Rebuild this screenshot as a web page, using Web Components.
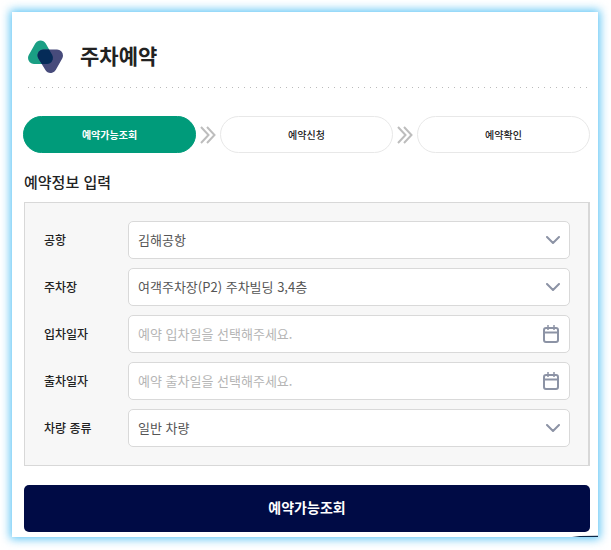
<!DOCTYPE html>
<html lang="ko">
<head>
<meta charset="utf-8">
<meta name="viewport" content="width=device-width, initial-scale=1">
<title>주차예약</title>
<style>
  body {
    margin: 0;
    padding: 12px 13px 13px 12px;
    background: #fff;
    color: #222;
    font-family: "Noto Sans CJK KR", "Noto Sans", sans-serif;
  }
</style>
</head>
<body>
<parking-card>
  <page-header>주차예약</page-header>
  <step-list>
    <step-item current>예약가능조회</step-item>
    <step-item>예약신청</step-item>
    <step-item>예약확인</step-item>
  </step-list>
  <reserve-form heading="예약정보 입력" action="예약가능조회">
    <select-field label="공항" value="김해공항"></select-field>
    <select-field label="주차장" value="여객주차장(P2) 주차빌딩 3,4층"></select-field>
    <date-field label="입차일자" placeholder="예약 입차일을 선택해주세요."></date-field>
    <date-field label="출차일자" placeholder="예약 출차일을 선택해주세요."></date-field>
    <select-field label="차량 종류" value="일반 차량"></select-field>
  </reserve-form>
</parking-card>

<script>
class ParkingCard extends HTMLElement {
  constructor() {
    super();
    this.attachShadow({ mode: "open" });
    this.shadowRoot.innerHTML = `
      <style>
        :host {
          display: block;
          position: relative;
        }
        .glow {
          position: absolute;
          inset: -2px;
          background: #5cc4f5;
          filter: blur(5px);
        }
        .card {
          position: relative;
          padding: 26px 8px 5px 12px;
          background: #fff;
        }
        /* top edge of the floating button below the card */
        .edge {
          position: absolute;
          right: 0;
          bottom: 0;
          width: 26px;
          height: 2px;
          background: #0a2748;
          clip-path: polygon(0 100%, 30% 50%, 100% 40%, 100% 100%);
        }
      </style>
      <div class="glow"></div>
      <div class="card">
        <slot></slot>
        <div class="edge"></div>
      </div>
    `;
  }
}

class PageHeader extends HTMLElement {
  constructor() {
    super();
    this.attachShadow({ mode: "open" });
    this.shadowRoot.innerHTML = `
      <style>
        :host { display: block; margin-left: 4px; }
        header {
          display: flex;
          align-items: center;
          gap: 16px;
          height: 36px;
        }
        h1 { margin: 0; padding-bottom: 2px; font-size: 21px; line-height: 32px; font-weight: 700; }
        .dots {
          height: 1px;
          margin-top: 13px;
          background: repeating-linear-gradient(90deg, #bbb 0 1px, transparent 1px 6px);
        }
      </style>
      <header>
        <svg width="36" height="36" viewBox="0 0 36 36" stroke-width="12" stroke-linejoin="round" aria-hidden="true">
          <defs>
            <mask id="front" maskUnits="userSpaceOnUse" x="0" y="0" width="36" height="36">
              <path d="M15.500 17.500H29L22.500 29Z" fill="#fff" stroke="#fff"/>
            </mask>
          </defs>
          <path d="M12.500 8.500L19 20H6Z" fill="#1a9f84" stroke="#1a9f84"/>
          <path d="M15.500 17.500H29L22.500 29Z" fill="#474b7b" stroke="#474b7b"/>
          <g mask="url(#front)">
            <path d="M12.500 8.500L19 20H6Z" fill="#052b58" stroke="#052b58"/>
          </g>
        </svg>
        <h1><slot></slot></h1>
      </header>
      <div class="dots"></div>
    `;
  }
}

class StepList extends HTMLElement {
  constructor() {
    super();
    this.attachShadow({ mode: "open" });
    this.shadowRoot.innerHTML = `
      <style>
        :host {
          display: flex;
          margin: 28px 0 0 -1px;
        }
      </style>
      <slot></slot>
    `;
  }
}

class StepItem extends HTMLElement {
  constructor() {
    super();
    this.attachShadow({ mode: "open" });
    this.shadowRoot.innerHTML = `
      <style>
        :host { display: flex; flex: 1 1 0; align-items: center; }
        :host(:not(:first-child)) { flex-basis: 24px; }
        svg { flex: none; width: 16px; height: 18px; margin: 0 4px; }
        :host(:first-child) svg { display: none; }
        .pill {
          flex: 1;
          box-sizing: border-box;
          border: 1px solid #e8e8e8;
          border-radius: 19px;
          text-align: center;
          font-size: 10px;
          line-height: 35px;
          font-weight: 500;
        }
        :host([current]) .pill {
          border-color: #009b7a;
          background: #009b7a;
          color: #fff;
          font-weight: 700;
        }
      </style>
      <svg viewBox="0 0 16 18" fill="none" stroke="#bdbdbd" stroke-width="2" aria-hidden="true">
        <path d="M1 1L8.500 9L1 17M7 1L14.500 9L7 17"/>
      </svg>
      <div class="pill"><slot></slot></div>
    `;
  }
}

class ReserveForm extends HTMLElement {
  constructor() {
    super();
    this.attachShadow({ mode: "open" });
    this.shadowRoot.innerHTML = `
      <style>
        :host { display: block; }
        h2 {
          margin: 0;
          padding: 17px 0 8px;
          font-size: 15px;
          line-height: 24px;
          font-weight: 500;
        }
        .panel {
          display: grid;
          gap: 9px;
          padding: 18px 18px 18px 19px;
          border: 1px solid #d8d8d8;
          border-right-width: 2px;
          background: #f7f7f7;
        }
        button {
          display: block;
          width: 100%;
          margin: 19px 0 0;
          padding: 0 0 2px;
          border: 0;
          border-radius: 5px;
          background: #000b45;
          color: #fff;
          font: inherit;
          font-size: 14px;
          line-height: 45px;
          font-weight: 700;
        }
      </style>
      <form>
        <h2>${this.getAttribute("heading")}</h2>
        <div class="panel"><slot></slot></div>
        <button type="button">${this.getAttribute("action")}</button>
      </form>
    `;
  }
}

const fieldStyle = `
  :host { display: flex; align-items: center; }
  label {
    flex: none;
    width: 84px;
    font-size: 12px;
    line-height: 20px;
    font-weight: 500;
  }
  .box {
    flex: 1;
    min-width: 0;
    box-sizing: border-box;
    height: 38px;
    border: 1px solid #d9d9d9;
    border-radius: 5px;
    background: #fff;
  }
  select, input {
    box-sizing: border-box;
    width: 100%;
    min-width: 0;
    height: 36px;
    margin: 0;
    padding: 0 9px 2px;
    border: 0;
    background: none;
    color: #555;
    font: inherit;
    font-size: 13px;
  }
  svg { display: block; fill: none; stroke: #8c93a5; }
`;

class SelectField extends HTMLElement {
  constructor() {
    super();
    this.attachShadow({ mode: "open" });
    this.shadowRoot.innerHTML = `
      <style>
        ${fieldStyle}
        .box { display: grid; align-items: center; }
        .box > * { grid-area: 1 / 1; }
        select { appearance: none; }
        svg { justify-self: end; margin-right: 9px; pointer-events: none; }
      </style>
      <label for="field">${this.getAttribute("label")}</label>
      <div class="box">
        <select id="field"><option>${this.getAttribute("value")}</option></select>
        <svg width="14" height="8" viewBox="0 0 14 8" stroke-width="2" stroke-linecap="round" stroke-linejoin="round" aria-hidden="true">
          <path d="M1 1L7 7L13 1"/>
        </svg>
      </div>
    `;
  }
}

class DateField extends HTMLElement {
  constructor() {
    super();
    this.attachShadow({ mode: "open" });
    this.shadowRoot.innerHTML = `
      <style>
        ${fieldStyle}
        .box { display: flex; align-items: center; }
        input::placeholder { color: #b5b5b5; opacity: 1; }
        button { flex: none; margin: 0 10px 0 0; padding: 0; border: 0; background: none; }
      </style>
      <label for="field">${this.getAttribute("label")}</label>
      <div class="box">
        <input id="field" type="text" placeholder="${this.getAttribute("placeholder")}">
        <button type="button" aria-label="${this.getAttribute("label")}">
          <svg width="16" height="18" viewBox="0 0 16 18" stroke-width="2" aria-hidden="true">
            <rect x="1" y="3" width="14" height="14" rx="2"/>
            <path d="M1 7.500H15" stroke-width="2"/>
            <path d="M5 0V5M11 0V5" stroke-width="1.500"/>
          </svg>
        </button>
      </div>
    `;
  }
}

customElements.define("parking-card", ParkingCard);
customElements.define("page-header", PageHeader);
customElements.define("step-list", StepList);
customElements.define("step-item", StepItem);
customElements.define("reserve-form", ReserveForm);
customElements.define("select-field", SelectField);
customElements.define("date-field", DateField);
</script>
</body>
</html>
